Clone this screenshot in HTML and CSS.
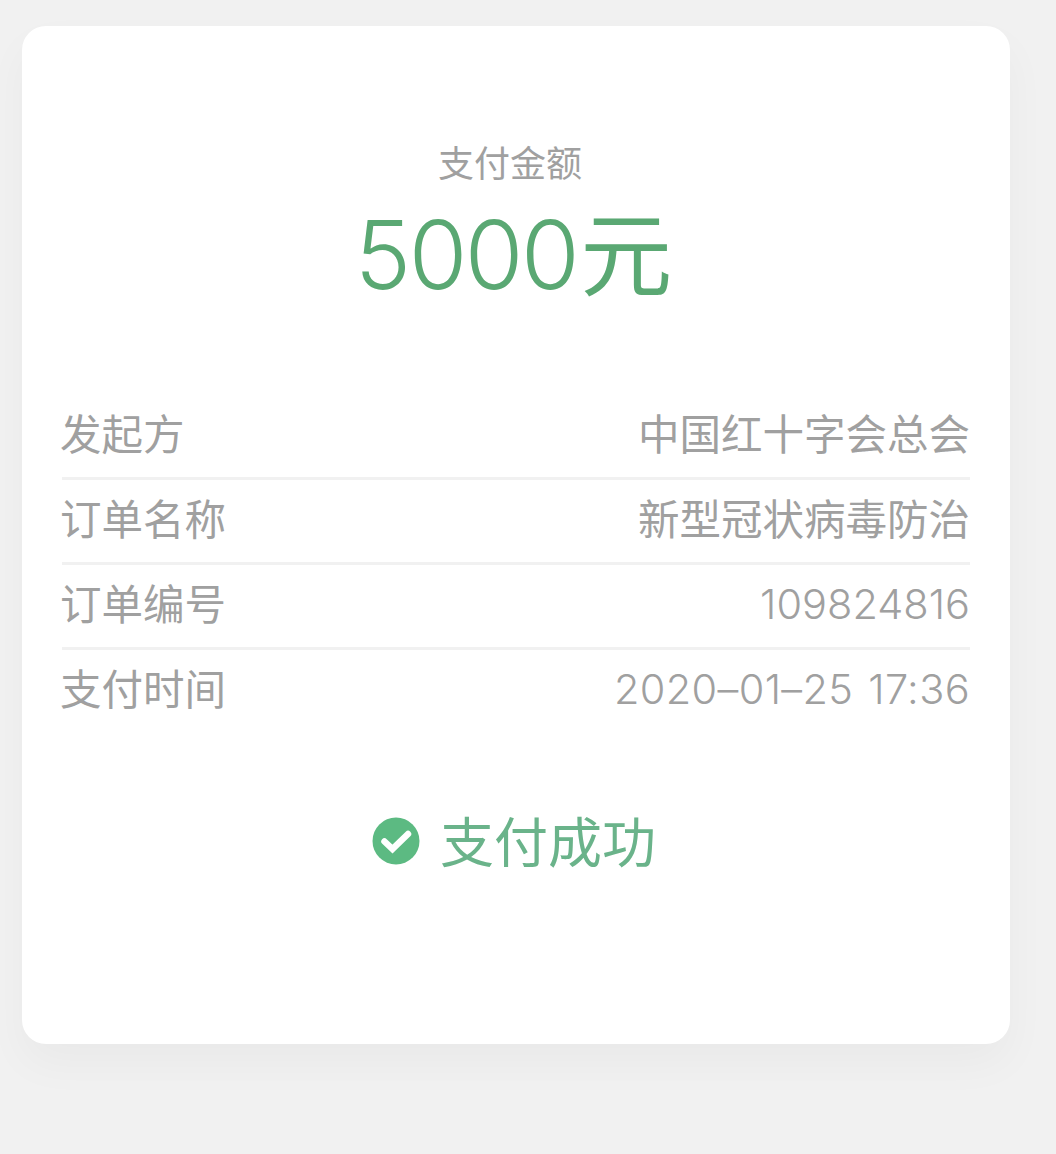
FILE: index.html
```html
<!DOCTYPE html>
<html lang="zh-CN">

<head>
    <meta charset="UTF-8">
    <title>支付金额</title>
    <link rel="stylesheet" href="styles.css">
</head>

<body>
    <div class="card">
        <div class="amount-label">支付金额</div>
        <div class="amount"><span class="amount-value">5000</span><span class="amount-unit">元</span></div>
        <div class="rows">
            <div class="row"><span>发起方</span><span>中国红十字会总会</span></div>
            <div class="row"><span>订单名称</span><span>新型冠状病毒防治</span></div>
            <div class="row"><span>订单编号</span><span class="row-num">109824816</span></div>
            <div class="row"><span>支付时间</span><span class="row-num row-time">2020–01–25 17:36</span></div>
        </div>
        <div class="status">
            <svg class="status-icon" width="48" height="48" viewBox="0 0 48 48">
                <circle cx="24" cy="24" r="23.5" fill="#5cba82" />
                <path d="M12.5 24.5l8 7.5 15.5-15" fill="none" stroke="#fff" stroke-width="6.5" stroke-linecap="round" />
            </svg>
            <span>支付成功</span>
        </div>
    </div>
</body>

</html>
```

FILE: styles.css
```css
html,
body {
    height: 100%;
}

body {
    margin: 0;
    padding: 26px 46px 0 22px;
    box-sizing: border-box;
    background-color: #f1f1f1;
    font-family: Inter, "Noto Sans CJK SC", sans-serif;
    overflow: hidden;
}

.card {
    height: 1018px;
    padding: 115px 40px 0 40px;
    box-sizing: border-box;
    background-color: #fff;
    border-radius: 24px;
    box-shadow: 0 20px 44px rgba(0, 0, 0, 0.035);
}

.amount-label {
    padding: 1px 12px 0 0;
    font-size: 36px;
    line-height: 44px;
    text-align: center;
    color: #a0a0a0;
}

.amount {
    margin-top: 14px;
    padding-right: 5px;
    font-size: 95px;
    line-height: 110px;
    text-align: center;
    color: #5aa873;
}

.amount-value {
    font-weight: 350;
    letter-spacing: -2.5px;
}

.amount-unit {
    margin-left: 3px;
    font-size: 92px;
}

.rows {
    margin-top: 84px;
}

.row {
    display: flex;
    justify-content: space-between;
    align-items: center;
    height: 85px;
    padding-bottom: 8px;
    box-sizing: border-box;
    border-bottom: 3px solid #f1f1f1;
    font-size: 41.5px;
    color: #a0a0a0;
}

.row span:first-child {
    margin-left: -2px;
}

.row:last-child {
    border-bottom-color: transparent;
}

.row-num {
    margin-top: 4px;
    font-weight: 350;
}

.row-time {
    letter-spacing: 0.35px;
    word-spacing: 3px;
}

.status {
    display: flex;
    justify-content: center;
    align-items: center;
    gap: 20px;
    margin: 77px 4px 0 0;
    font-size: 54px;
    line-height: 64px;
    color: #6ab38a;
}

.status-icon {
    margin-bottom: 6px;
}
```
